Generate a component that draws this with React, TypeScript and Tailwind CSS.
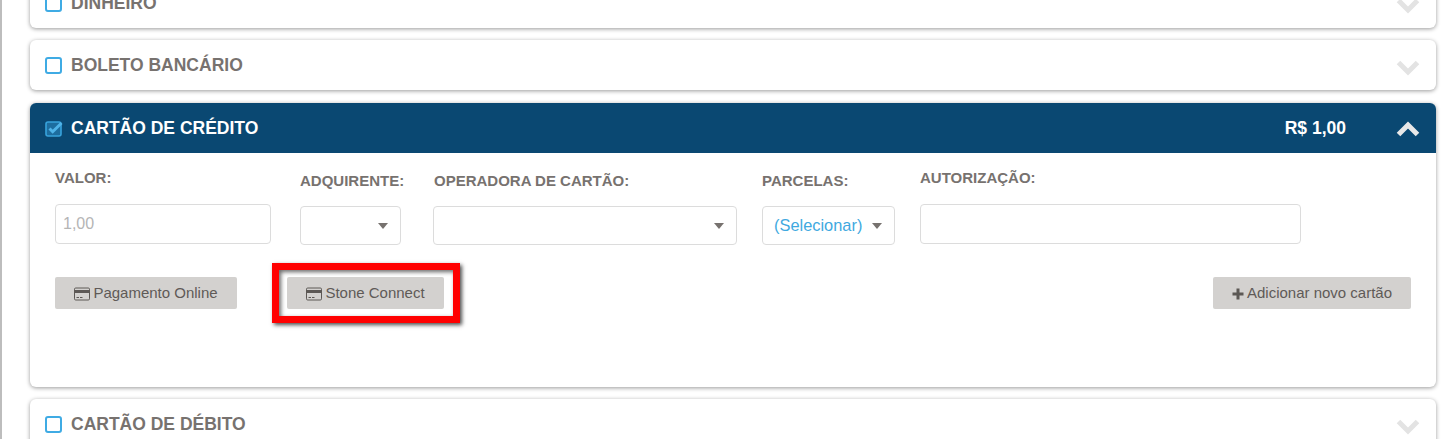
import React from 'react';

const Chevron: React.FC<{ up?: boolean }> = ({ up }) => (
  <svg width="24" height="16" viewBox="0 0 24 16" className="block">
    <polyline
      points={up ? '2.5,13.5 12,4 21.5,13.5' : '2.5,2.5 12,12 21.5,2.5'}
      fill="none"
      stroke={up ? '#e8e8e8' : '#e3e3e3'}
      strokeWidth="5"
    />
  </svg>
);

const CardIcon = () => (
  <svg width="16" height="14" viewBox="0 0 16 14" className="block shrink-0">
    <rect x="0.5" y="1" width="15" height="12" rx="1.2" fill="none" stroke="#5c5855" strokeWidth="1" />
    <rect x="0.5" y="3" width="15" height="3" fill="#5c5855" />
    <rect x="2.5" y="10" width="2.5" height="1" fill="#5c5855" />
    <rect x="6" y="10" width="2.5" height="1" fill="#5c5855" />
  </svg>
);

const PlusIcon = () => (
  <svg width="12" height="12" viewBox="0 0 12 12" className="block shrink-0">
    <path d="M4.5 0.5h3v4h4v3h-4v4h-3v-4h-4v-3h4z" fill="#5c5855" />
  </svg>
);

const Caret = () => (
  <svg width="10" height="6" viewBox="0 0 10 6" className="block shrink-0">
    <path d="M0 0h10L5 6z" fill="#77726f" />
  </svg>
);

const CheckedBox = () => (
  <svg width="19" height="17" viewBox="0 0 19 17" className="block shrink-0">
    <rect x="1" y="2" width="15" height="14" rx="2" fill="#1d6d9f" stroke="#38a3dc" strokeWidth="1.6" />
    <path d="M4.5 8.5l3.2 3.2L16.5 3" fill="none" stroke="#4fb3e8" strokeWidth="3" />
  </svg>
);

const SectionRow: React.FC<{ title: string; className?: string }> = ({ title, className }) => (
  <div className={`flex h-[50px] shrink-0 items-center rounded-[6px] bg-white pl-[15px] pr-[16px] shadow-[0_1px_4px_rgba(0,0,0,0.4)] ${className ?? ''}`}>
    <span className="h-[17px] w-[17px] rounded-[3px] border-2 border-[#3fabe4] bg-white" />
    <span className="ml-[9px] text-[17.5px] font-bold text-[#77726f]">{title}</span>
    <span className="ml-auto mt-[5px]">
      <Chevron />
    </span>
  </div>
);

const Field: React.FC<{ label: string; labelClass: string; className: string; children: React.ReactNode }> = ({
  label,
  labelClass,
  className,
  children,
}) => (
  <div className={className}>
    <div className={`whitespace-nowrap text-[15px] font-bold leading-[16px] text-[#77726f] ${labelClass}`}>{label}</div>
    {children}
  </div>
);

const SelectBox: React.FC<{ text?: string; className?: string }> = ({ text, className }) => (
  <div className={`flex h-[39px] items-center justify-between rounded-[4px] border border-[#dcdcdc] bg-white pl-[11px] pr-[12px] ${className ?? ''}`}>
    <span className="text-[16.4px] text-[#3fa9e0]">{text}</span>
    <Caret />
  </div>
);

const Button: React.FC<{ icon: React.ReactNode; label: string; className?: string }> = ({ icon, label, className }) => (
  <button className={`flex h-[32px] items-center justify-center gap-[3px] rounded-[2px] bg-[#d3d1cf] pt-[1px] text-[15px] text-[#5f5a57] ${className ?? ''}`}>
    {icon}
    {label}
  </button>
);

export default function App() {
  return (
    <div className="h-[439px] w-[1455px] overflow-hidden bg-white font-['Liberation_Sans',Arial,sans-serif]">
      <div className="flex h-full">
        <div className="h-full w-[2px] shrink-0 bg-[#bdbdbd]" />
        <div className="ml-[28px] mt-[-22px] flex w-[1406px] flex-col">
          <SectionRow title="DINHEIRO" />
          <SectionRow title="BOLETO BANCÁRIO" className="mt-[12px]" />

          <div className="mt-[13px] h-[284px] shrink-0 rounded-[6px] bg-white shadow-[0_1px_4px_rgba(0,0,0,0.4)]">
            <div className="flex h-[50px] items-center rounded-t-[6px] bg-[#0a4872] pl-[15px] pr-[16px]">
              <CheckedBox />
              <span className="ml-[7px] text-[17.5px] font-bold text-white">CARTÃO DE CRÉDITO</span>
              <span className="ml-auto text-[17.5px] font-bold text-white">R$ 1,00</span>
              <span className="ml-[50px] mt-[1px]">
                <Chevron up />
              </span>
            </div>

            <div className="relative pl-[25px]">
              <div className="flex items-start">
                <Field label="VALOR:" labelClass="mt-[17px]" className="w-[216px]">
                  <div className="mt-[18px] flex h-[40px] items-center rounded-[4px] border border-[#dcdcdc] pl-[7px] text-[16px] text-[#b5b5b5]">
                    1,00
                  </div>
                </Field>
                <Field label="ADQUIRENTE:" labelClass="mt-[20px]" className="ml-[29px] w-[101px]">
                  <SelectBox className="mt-[17px]" />
                </Field>
                <Field label="OPERADORA DE CARTÃO:" labelClass="ml-[1px] mt-[20px]" className="ml-[32px] w-[304px]">
                  <SelectBox className="mt-[17px]" />
                </Field>
                <Field label="PARCELAS:" labelClass="mt-[20px]" className="ml-[25px] w-[133px]">
                  <SelectBox text="(Selecionar)" className="mt-[17px]" />
                </Field>
                <Field label="AUTORIZAÇÃO:" labelClass="mt-[17px]" className="ml-[25px] w-[381px]">
                  <div className="mt-[18px] h-[40px] rounded-[4px] border border-[#dcdcdc]" />
                </Field>
              </div>

              <div className="mt-[32px] flex items-center pr-[25px]">
                <Button icon={<CardIcon />} label="Pagamento Online" className="w-[182px]" />
                <Button icon={<CardIcon />} label="Stone Connect" className="ml-[50px] w-[157px]" />
                <Button icon={<PlusIcon />} label="Adicionar novo cartão" className="ml-auto w-[198px]" />
              </div>

              {/* marcação vermelha em volta do botão */}
              <div className="absolute left-[242px] top-[110px] h-[60px] w-[188px] border-[7px] border-[#ff0000] shadow-[2px_2px_4px_rgba(0,0,0,0.7),inset_2px_2px_4px_rgba(0,0,0,0.6)]" />
            </div>
          </div>

          <SectionRow title="CARTÃO DE DÉBITO" className="mt-[12px]" />
        </div>
      </div>
    </div>
  );
}
